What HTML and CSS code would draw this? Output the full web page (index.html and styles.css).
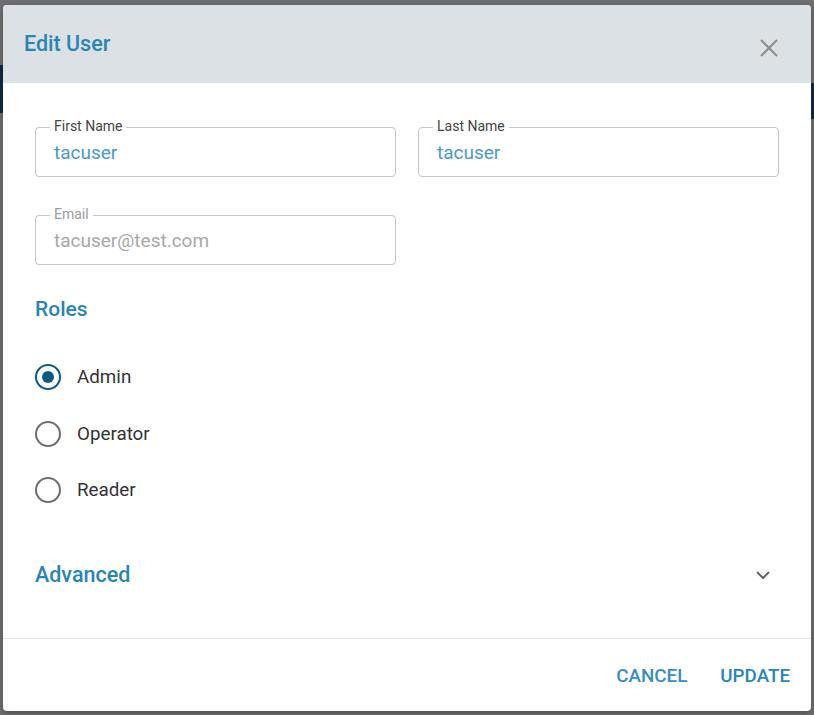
FILE: index.html
```html
<!DOCTYPE html>
<html>
<head>
<meta charset="utf-8">
<link rel="stylesheet" href="styles.css">
</head>
<body>
<div class="strip strip-left"></div>
<div class="strip strip-right"></div>
<div class="dialog">
  <div class="header">
    <h1 class="title">Edit User</h1>
    <svg class="close" width="20" height="20" viewBox="0 0 20 20"><path d="M2 2L18 18M18 2L2 18" stroke="#8c8c8c" stroke-width="2" fill="none"/></svg>
  </div>
  <div class="body">
    <div class="grid">
      <div class="field">
        <span class="label">First Name</span>
        <span class="value">tacuser</span>
      </div>
      <div class="field">
        <span class="label">Last Name</span>
        <span class="value">tacuser</span>
      </div>
      <div class="field disabled">
        <span class="label">Email</span>
        <span class="value">tacuser@test.com</span>
      </div>
    </div>
    <h2 class="section">Roles</h2>
    <div class="radios">
      <div class="radio checked"><span class="circle"><span class="dot"></span></span><span class="rlabel">Admin</span></div>
      <div class="radio"><span class="circle"></span><span class="rlabel">Operator</span></div>
      <div class="radio"><span class="circle"></span><span class="rlabel">Reader</span></div>
    </div>
    <div class="advanced">
      <h2 class="section adv">Advanced</h2>
      <svg class="chev" width="16" height="10" viewBox="0 0 16 10"><path d="M2 2L8 8L14 2" stroke="#666" stroke-width="2" fill="none"/></svg>
    </div>
  </div>
  <div class="footer">
    <button class="btn cancel">CANCEL</button>
    <button class="btn update">UPDATE</button>
  </div>
</div>
</body>
</html>
```
FILE: styles.css
```css
html, body {
  margin: 0;
  padding: 0;
}
body {
  background: #6f6f6f;
  width: 814px;
  height: 715px;
  overflow: hidden;
  position: relative;
  font-family: Roboto, "Liberation Sans", sans-serif;
}
.strip {
  position: absolute;
  background: #0f2a44;
  width: 4px;
}
.strip-left { left: 0; top: 65px; height: 48px; width: 3px; }
.strip-right { right: 0; top: 83px; height: 36px; width: 3px; }
.dialog {
  position: relative;
  margin: 5px 0 0 3px;
  width: 808px;
  height: 706px;
  background: #fff;
  border-radius: 4px;
  overflow: hidden;
  display: flex;
  flex-direction: column;
  box-shadow: 0 2px 6px rgba(0,0,0,0.3);
}
.header {
  height: 78px;
  background: #dce1e5;
  display: flex;
  align-items: center;
  justify-content: space-between;
  padding: 0 32px 0 21px;
  flex-shrink: 0;
}
.title {
  margin: 0;
  font-size: 21.5px;
  font-weight: 500;
  color: #2a84b4;
  padding-bottom: 2px;
}
.close {
  display: block;
  margin-top: 8px;
}
.body {
  padding: 44px 32px 0 32px;
  flex: 1;
}
.grid {
  display: grid;
  grid-template-columns: 361px 361px;
  column-gap: 22px;
  row-gap: 38px;
}
.field {
  position: relative;
  height: 50px;
  border: 1px solid #c6c6c6;
  border-radius: 4px;
  box-sizing: border-box;
  display: flex;
  align-items: center;
  padding-left: 18px;
}
.label {
  position: absolute;
  top: -10px;
  left: 14px;
  padding: 0 4px;
  background: #fff;
  font-size: 14px;
  line-height: 17px;
  color: #444;
}
.value {
  font-size: 19px;
  color: #4a9ac6;
}
.disabled .label { color: #9c9c9c; }
.disabled .value { color: #a8a8a8; }
.section {
  margin: 0;
  font-size: 21px;
  font-weight: 500;
  color: #2a84b4;
  line-height: 24px;
}
.body > .section {
  margin-top: 32px;
}
.radios {
  margin-top: 43px;
  display: flex;
  flex-direction: column;
  gap: 30.5px;
}
.radio {
  display: flex;
  align-items: center;
  height: 26px;
}
.circle {
  width: 26px;
  height: 26px;
  box-sizing: border-box;
  border: 2.5px solid #6f6f6f;
  border-radius: 50%;
  display: flex;
  align-items: center;
  justify-content: center;
}
.checked .circle {
  border-color: #0b5a86;
}
.dot {
  width: 12px;
  height: 12px;
  border-radius: 50%;
  background: #0b5a86;
}
.rlabel {
  margin-left: 16px;
  font-size: 18.8px;
  color: #333;
}
.advanced {
  margin-top: 60px;
  display: flex;
  align-items: center;
  justify-content: space-between;
  padding-right: 8px;
}
.adv {
  font-size: 21.5px;
}
.footer {
  border-top: 1.5px solid #e6e6e6;
  height: 70px;
  display: flex;
  align-items: center;
  justify-content: flex-end;
  padding-right: 21px;
  padding-top: 2px;
  gap: 33px;
  flex-shrink: 0;
}
.btn {
  background: none;
  border: none;
  padding: 0;
  font-family: Roboto, "Liberation Sans", sans-serif;
  font-size: 18.8px;
  font-weight: 500;
  color: #2a84b4;
  letter-spacing: 0;
}
.cancel { color: #3a8dbd; }
```
